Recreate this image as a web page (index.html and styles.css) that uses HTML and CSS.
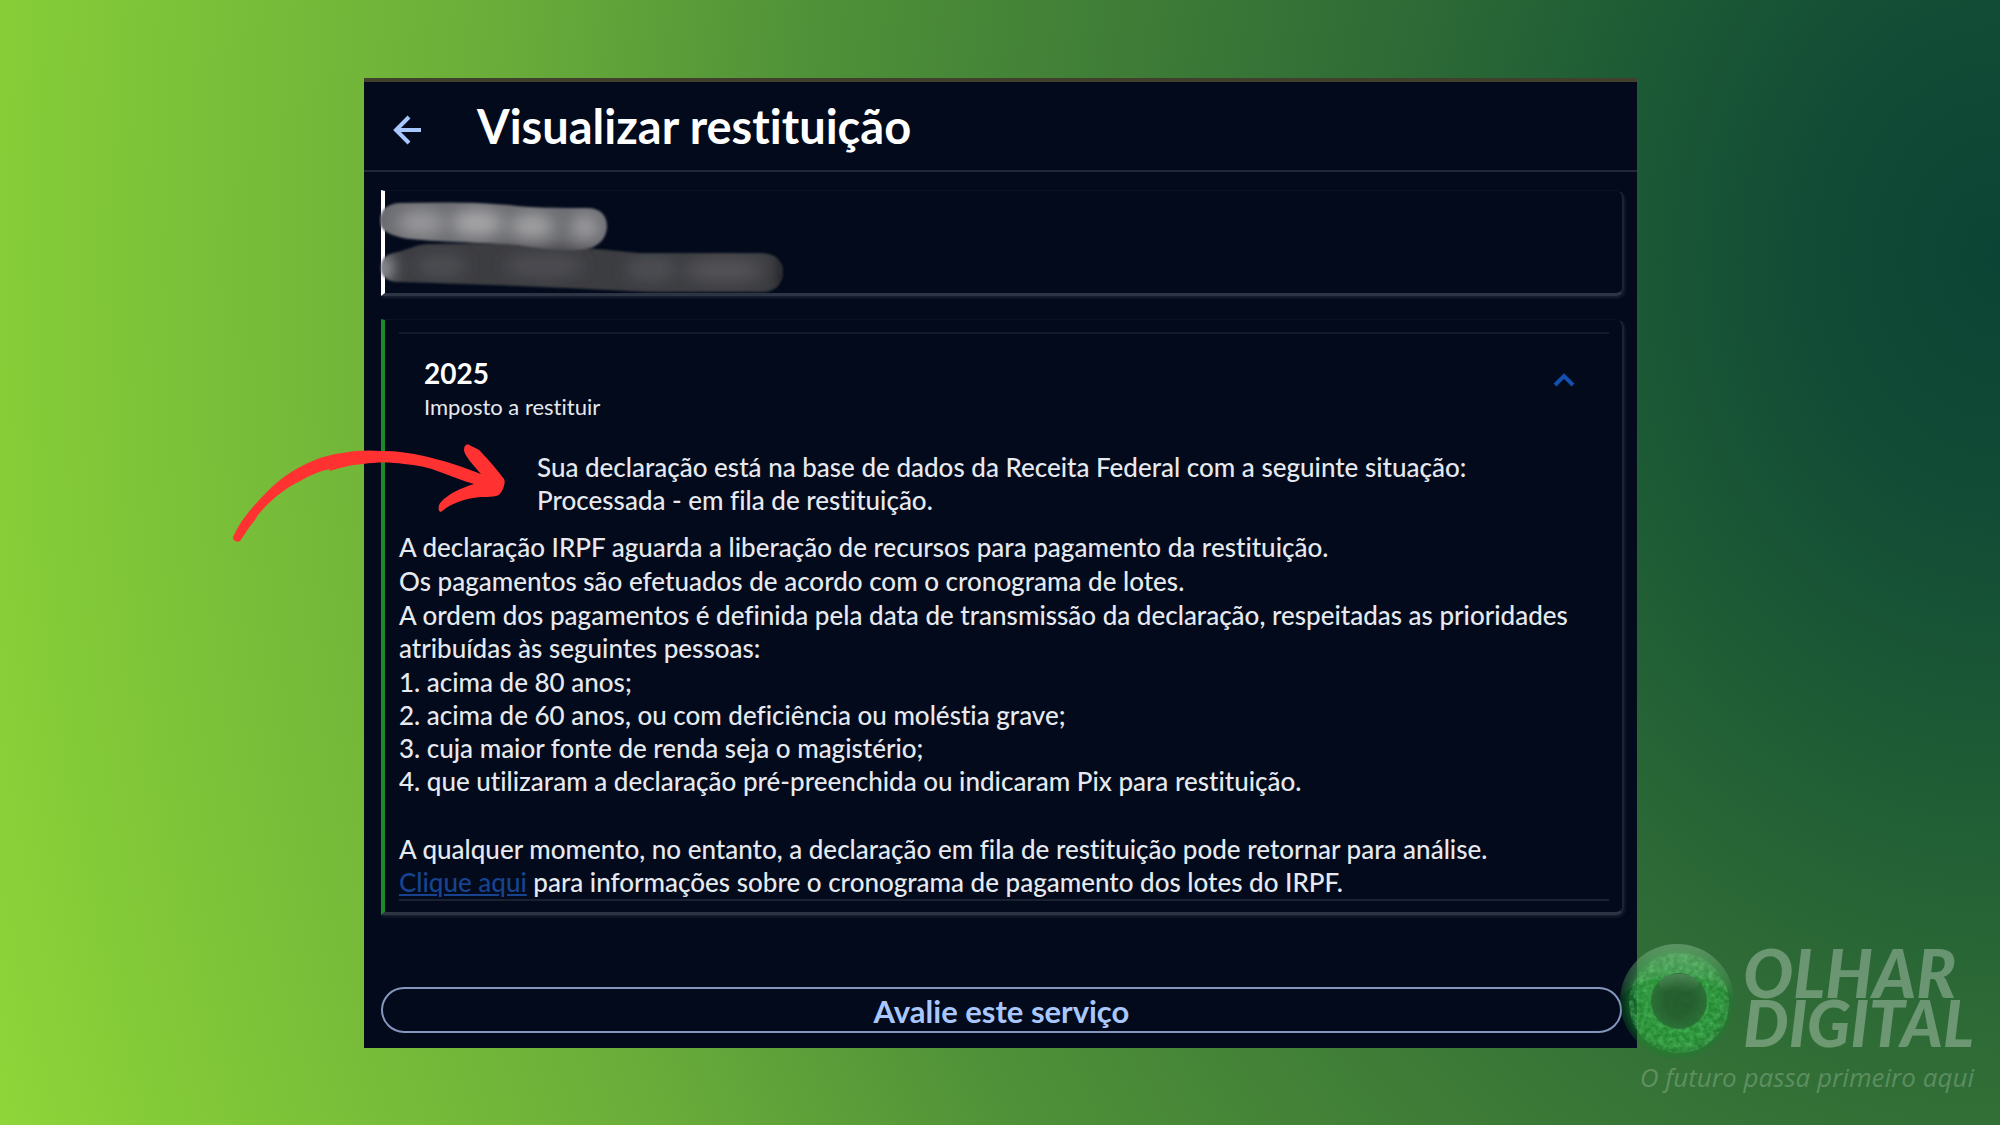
FILE: index.html
```html
<!DOCTYPE html>
<html lang="pt-BR">
<head>
<meta charset="utf-8">
<title>Visualizar restituição</title>
<link rel="stylesheet" href="styles.css">
</head>
<body>
<main class="panel">
  <header class="topbar">
    <button class="back" type="button" aria-label="Voltar">
      <svg width="28" height="30" viewBox="0 0 28 30" fill="none" stroke="currentColor" stroke-width="4"><path d="M28 15H3M16 2L3 15l13 13"/></svg>
    </button>
    <h1 class="title">Visualizar restituição</h1>
  </header>

  <section class="card card-person" aria-label="Contribuinte">
    <svg class="smudge" width="408" height="98" viewBox="0 0 408 98" aria-hidden="true">
      <defs>
        <filter id="soft" x="-5%" y="-10%" width="110%" height="120%"><feGaussianBlur stdDeviation="1"/></filter>
        <filter id="glow" x="-50%" y="-50%" width="200%" height="200%"><feGaussianBlur stdDeviation="8"/></filter>
        <clipPath id="line1"><path d="M1 25C1 14 8 8 20 7C60 6 100 6 130 9C150 12 180 12 208 12C222 12 228 20 228 30C228 38 224 46 216 50C206 56 170 54 140 49C100 46 50 46 24 42C8 38 1 34 1 25Z"/></clipPath>
        <clipPath id="line2"><path d="M2 72C2 64 6 59 14 57C30 54 36 48 50 48C120 46 190 50 260 57H380C396 57 404 64 404 76C404 88 396 96 384 96H270C190 92 100 88 20 86C8 86 2 80 2 72Z"/></clipPath>
      </defs>
      <g filter="url(#soft)">
        <g clip-path="url(#line2)">
          <rect width="408" height="98" fill="#3b3c41"/>
          <g filter="url(#glow)">
            <ellipse cx="4" cy="72" rx="10" ry="14" fill="#a2a5aa"/>
            <ellipse cx="62" cy="70" rx="26" ry="12" fill="#4c4d52"/>
            <ellipse cx="165" cy="70" rx="40" ry="12" fill="#4d4e53"/>
            <ellipse cx="272" cy="73" rx="26" ry="12" fill="#4e4f54"/>
            <ellipse cx="345" cy="74" rx="40" ry="13" fill="#525257"/>
            <ellipse cx="408" cy="76" rx="8" ry="24" fill="#1c1d22"/>
          </g>
        </g>
        <g clip-path="url(#line1)">
          <rect width="408" height="98" fill="#6b6c71"/>
          <g filter="url(#glow)">
            <ellipse cx="42" cy="27" rx="24" ry="13" fill="#98989b"/>
            <ellipse cx="98" cy="27" rx="26" ry="14" fill="#a4a4a6"/>
            <ellipse cx="153" cy="30" rx="22" ry="13" fill="#a0a0a2"/>
            <ellipse cx="206" cy="31" rx="14" ry="13" fill="#9c9c9f"/>
            <ellipse cx="160" cy="58" rx="80" ry="7" fill="#3a3b40"/>
          </g>
        </g>
      </g>
    </svg>
  </section>

  <section class="card card-year">
    <div class="year-body">
      <div class="year-head">
        <div>
          <h2 class="year">2025</h2>
          <p class="kind">Imposto a restituir</p>
        </div>
        <button class="toggle" type="button" aria-label="Recolher">
          <svg width="22" height="14" viewBox="0 0 22 14" fill="none" stroke="currentColor" stroke-width="4"><path d="M2 12l9-9 9 9"/></svg>
        </button>
      </div>
      <p class="status">Sua declaração está na base de dados da Receita Federal com a seguinte situação:<br>Processada - em fila de restituição.</p>
      <div class="details">
        <p>A declaração IRPF aguarda a liberação de recursos para pagamento da restituição.</p>
        <p>Os pagamentos são efetuados de acordo com o cronograma de lotes.</p>
        <p>A ordem dos pagamentos é definida pela data de transmissão da declaração, respeitadas as prioridades<br>atribuídas às seguintes pessoas:</p>
        <ol class="priorities">
          <li>1. acima de 80 anos;</li>
          <li>2. acima de 60 anos, ou com deficiência ou moléstia grave;</li>
          <li>3. cuja maior fonte de renda seja o magistério;</li>
          <li>4. que utilizaram a declaração pré-preenchida ou indicaram Pix para restituição.</li>
        </ol>
        <p class="note">A qualquer momento, no entanto, a declaração em fila de restituição pode retornar para análise.<br><a class="link" href="#lotes">Clique aqui</a> para informações sobre o cronograma de pagamento dos lotes do IRPF.</p>
      </div>
    </div>
    <svg class="pointer" width="276" height="102" viewBox="231 442 276 102" aria-hidden="true">
      <path fill="#ff3131" d="M233 537C240 522 248 512 261 498C277 481 288 473 302 466C317 458 328 455 342 453C356 450 370 450 383 451C398 451 411 453 424 456C446 461 463 467 481 474C474 466 464 455 464 450C464 445 467 443 471 446C475 448 479 449 481 452C490 461 498 471 504 479C506 483 503 491 499 495C491 498 484 496 473 498C461 500 449 505 441 512L439 511C438 507 439 504 441 502C448 494 461 488 474 484C463 481 452 476 440 472C428 467 416 465 404 464C390 462 377 462 363 464C350 465 340 468 329 471L330 469C320 471 310 475 302 480C290 486 279 493 269 503C259 513 257 516 255 520C249 527 245 534 240 541C237 543 232 540 233 537Z"/>
    </svg>
  </section>

  <button class="rate" type="button">Avalie este serviço</button>
</main>

<aside class="brand" aria-label="Olhar Digital">
  <svg class="eye" width="116" height="116" viewBox="0 0 116 116" aria-hidden="true">
    <defs>
      <radialGradient id="iris" cx=".5" cy=".5" r=".5">
        <stop offset=".45" stop-color="#1fa033"/><stop offset=".8" stop-color="#1c982e"/><stop offset="1" stop-color="#157a28" stop-opacity=".4"/>
      </radialGradient>
      <linearGradient id="gloss" x1="0" x2="0" y1="0" y2="1">
        <stop offset="0" stop-color="#a8c8ac" stop-opacity=".4"/><stop offset="1" stop-color="#a8c8ac" stop-opacity="0"/>
      </linearGradient>
      <radialGradient id="pupil" cx=".5" cy=".5" r=".5">
        <stop offset=".5" stop-color="#24592d"/><stop offset="1" stop-color="#2b6c36"/>
      </radialGradient>
      <filter id="grain" x="0" y="0" width="100%" height="100%">
        <feTurbulence type="fractalNoise" baseFrequency=".2" numOctaves="3" seed="4"/>
        <feColorMatrix values="0 0 0 0 .12  0 0 0 0 .62  0 0 0 0 .18  0 2 0 0 -.6"/>
        <feComposite in2="SourceGraphic" operator="in"/>
      </filter>
    </defs>
    <circle cx="58" cy="58" r="57" fill="url(#iris)" opacity=".6"/>
    <circle cx="60" cy="60" r="50" filter="url(#grain)" opacity=".5"/>
    <path d="M1 58A57 57 0 0 1 115 58C100 24 16 24 1 58Z" fill="url(#gloss)"/>
    <circle cx="60" cy="58" r="28" fill="url(#pupil)" opacity=".9"/>
    <ellipse cx="60" cy="40" rx="20" ry="9" fill="url(#gloss)" opacity=".6"/>
  </svg>
  <p class="brand-name"><span class="brand-top">OLHAR</span><span class="brand-bottom">DIGITAL</span></p>
  <p class="tagline">O futuro passa primeiro aqui</p>
</aside>
</body>
</html>
```
FILE: styles.css
```css
* { box-sizing: border-box; }

body {
  margin: 0;
  min-height: 100vh;
  position: relative;
  padding: 78px 18%;
  font-family: Lato, "Open Sans", sans-serif;
  font-variant-ligatures: none;
  color: #e6e9ef;
  background: radial-gradient(ellipse 100% 222% at 100% 23%, #0b4434 0%, #124c36 10%, #1d5b35 20%, #2b6836 29%, #3e7c37 44%, #4f9138 60%, #69ac3a 75%, #86cd38 100%, #8fd63a 106%);
}

h1, h2, p, ol { margin: 0; padding: 0; font-weight: inherit; }
button { font: inherit; background: none; border: 0; padding: 0; cursor: pointer; }
svg { display: block; }

.panel {
  margin: 0 3px 0 4px;
  padding-bottom: 15px;
  background: #020a1b;
  border-top: 4px solid #40402c;
}

.topbar {
  display: flex;
  align-items: center;
  gap: 56px;
  height: 90px;
  padding: 0 29px;
  border-bottom: 2px solid #212837;
}
.back { color: #a9c7ff; padding-top: 8px; }
.title { font-size: 47px; line-height: 52px; font-weight: 700; color: #fff; }

.card {
  position: relative;
  margin: 18px 13px 0 17px;
  border: 1px solid #0a1222;
  border-left: 4px solid #fff;
  border-right: 2px solid #1c2332;
  border-bottom: 3px solid #2d3443;
  border-radius: 0 8px 8px 0;
  box-shadow: 1px 2px 3px #1a2130;
}
.card-person { height: 106px; }
.smudge { position: absolute; left: -6px; top: 5px; }

.card-year { margin-top: 23px; border-left-color: #1c8a2a; padding: 12px 13px 11px 14px; }
.year-body { border-top: 2px solid #131b2a; border-bottom: 2px solid #1a2130; }
.year-head {
  display: flex;
  justify-content: space-between;
  padding: 23px 34px 0 25px;
}
.year { font-size: 28px; line-height: 33px; font-weight: 700; color: #fff; }
.kind { font-size: 22px; line-height: 33px; }
.toggle { align-self: flex-start; color: #124fae; padding-top: 16px; }
.status { padding: 28px 0 0 138px; font-size: 26px; line-height: 33px; font-weight: 500; }
.details {
  display: grid;
  gap: 1px;
  padding-top: 14px;
  font-size: 26px;
  font-weight: 500;
  line-height: 33px;
}
.priorities { list-style: none; }
.note { padding-top: 34px; }
.link { color: #17438f; }
.pointer { position: absolute; left: -154px; top: 122px; }

.rate {
  display: block;
  width: calc(100% - 32px);
  height: 46px;
  margin: 72px 15px 0 17px;
  padding-top: 2px;
  border: 2px solid #8796bd;
  border-radius: 23px;
  color: #a9c7ff;
  font-size: 31px;
  line-height: 36px;
  font-weight: 700;
}

.brand {
  position: absolute;
  right: 26px;
  bottom: 31px;
  display: grid;
  grid-template-columns: 116px auto;
  column-gap: 8px;
  font-style: italic;
  color: rgba(255, 255, 255, .3);
}
.brand-name { display: flex; flex-direction: column; font-weight: 900; padding-top: 6px; }
.brand-top { font-size: 66px; line-height: 48px; }
.brand-bottom { font-size: 64px; line-height: 52px; }
.tagline { grid-column: 1 / -1; justify-self: end; font-size: 26px; line-height: 36px; font-family: "Open Sans", sans-serif; color: rgba(255, 255, 255, .22); }
```
